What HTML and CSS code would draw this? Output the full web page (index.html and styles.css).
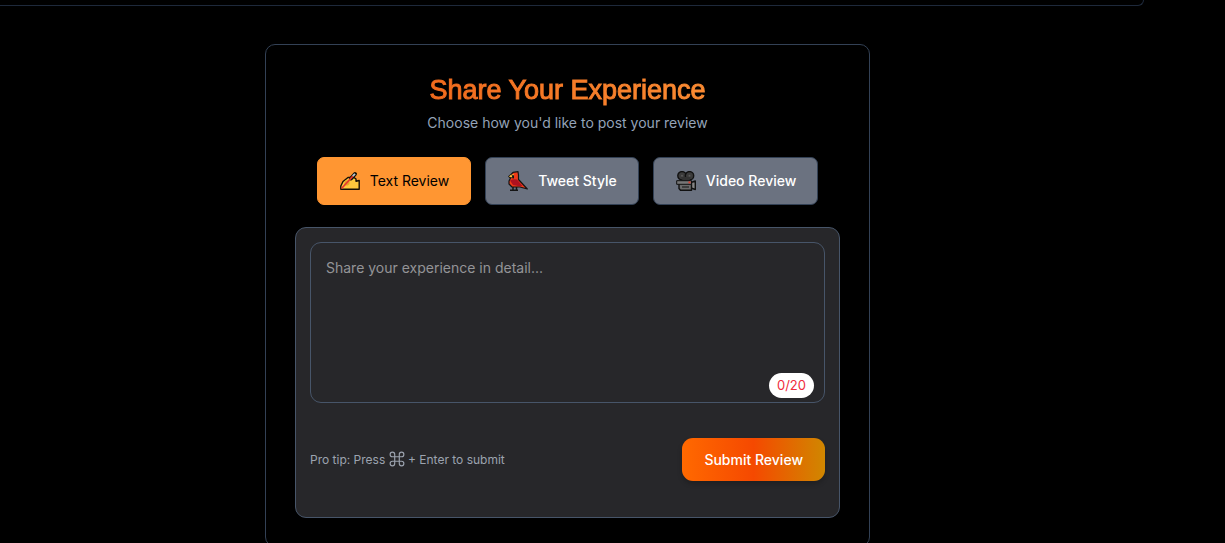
FILE: index.html
```html
<!DOCTYPE html>
<html lang="en">
<head>
<meta charset="utf-8">
<meta name="viewport" content="width=device-width, initial-scale=1">
<title>Share Your Experience</title>
<link rel="stylesheet" href="styles.css">
</head>
<body>
<main class="page">
  <div class="previous-section"></div>
  <section class="review-card">
    <header class="card-header">
      <h1 class="title">Share Your Experience</h1>
      <p class="subtitle">Choose how you'd like to post your review</p>
    </header>
    <div class="tabs">
      <button class="tab tab-active" type="button">
        <svg class="tab-icon" viewBox="0 0 20 20" aria-hidden="true">
          <path d="M.8 18.300V15L3 10.500L8 6.500L14 6.500L16 8V10.300L19.200 9.500V18.300Z" fill="#ffc83d" stroke="#161006" stroke-width="1.400" stroke-linejoin="round"/>
          <path d="M5 9.500H9.500V13L8 14.500H4Z" fill="#e9a329"/>
          <path d="M11 7.500L15 3" stroke="#161006" stroke-width="4" stroke-linecap="round"/>
          <path d="M1.500 17.500L13 5" stroke="#e63a2e" stroke-width="1.800"/>
          <path d="M12.800 5.200L15 2.800" stroke="#bcc8d1" stroke-width="1.800"/>
        </svg>
        <span>Text Review</span>
      </button>
      <button class="tab" type="button">
        <svg class="tab-icon" viewBox="0 0 20 20" aria-hidden="true">
          <path d="M5 16V19M8.500 16V19M2 19.300H10" fill="none" stroke="#151515" stroke-width="1.500"/>
          <path d="M10 .7L5 1.300L3 3.500L.8 5.500L2.500 7L1 10V13L4 16H12L19.300 18L10.500 8.500V4Z" fill="#f03a17" stroke="#151515" stroke-width="1.200" stroke-linejoin="round"/>
          <path d="M2 9.500Q5 7.500 9 8.500L14.500 15L10 15L5 14Z" fill="#ae1220"/>
          <path d="M3.500 3.500L6 4V7.500L3 7Z" fill="#151515"/>
          <path d="M.8 5.500L3.500 3.500L4.300 6.500Z" fill="#ffc83d"/>
          <circle cx="5" cy="3.800" r=".8" fill="#ffc83d"/>
        </svg>
        <span>Tweet Style</span>
      </button>
      <button class="tab" type="button">
        <svg class="tab-icon" viewBox="0 0 20 20" aria-hidden="true">
          <g stroke="#111" stroke-width="1.400" stroke-linejoin="round">
            <path d="M15 11.500L19.300 10V18.500L15 17Z" fill="#858585"/>
            <circle cx="6" cy="4.800" r="4.200" fill="#3b3b3b"/>
            <circle cx="13.500" cy="4.800" r="4.200" fill="#3b3b3b"/>
            <path d="M3 12H15.500V19.300H4.500L3 17.500Z" fill="#6a6a6a"/>
          </g>
          <path d="M5 6H15L13 10H7Z" fill="#333"/>
          <path d="M.7 9.700H15.500V13.300H.7Z" fill="#777" stroke="#111"/>
          <circle cx="6" cy="4.800" r="1" fill="#5a5a5a"/>
          <circle cx="13.500" cy="4.800" r="1" fill="#5a5a5a"/>
          <path d="M6 16H13" stroke="#222" stroke-width="1.200"/>
          <path d="M12.500 10.500H14.500V12.300H12.500Z" fill="#e33b2c"/>
        </svg>
        <span>Video Review</span>
      </button>
    </div>
    <form class="panel">
      <div class="field">
        <textarea class="review-input" aria-label="Your review" placeholder="Share your experience in detail..."></textarea>
        <span class="counter">0/20</span>
      </div>
      <div class="actions">
        <p class="tip">Pro tip: Press <svg class="command" viewBox="0 0 14 14" role="img" aria-label="Command"><path d="M5 5V3A2 2 0 1 0 3 5H11A2 2 0 1 0 9 3V11A2 2 0 1 0 11 9H3A2 2 0 1 0 5 11V5"/></svg> + Enter to submit</p>
        <button class="submit" type="button">Submit Review</button>
      </div>
    </form>
  </section>
</main>
</body>
</html>
```
FILE: styles.css
```css
* {
  box-sizing: border-box;
}

body {
  margin: 0;
  height: 100vh;
  overflow: hidden;
  background: #000;
  color: #fff;
  font-family: Inter, "Liberation Sans", sans-serif;
  font-size: 14px;
  line-height: 20px;
}

h1,
p {
  margin: 0;
}

button,
textarea {
  font: inherit;
}

.page {
  margin-left: -9px;
  padding-right: 81px;
}

.previous-section {
  height: 6px;
  border: solid #1e293b;
  border-width: 0 1px 1px 0;
  border-bottom-right-radius: 6px;
}

.review-card {
  max-width: 605px;
  margin: 38px auto 0;
  padding: 28px 29px;
  border: 1px solid #334155;
  border-radius: 10px;
}

.card-header {
  text-align: center;
}

.title {
  width: fit-content;
  margin: 0 auto;
  font-family: "Liberation Sans", Arial, sans-serif;
  font-size: 27px;
  font-weight: 400;
  line-height: 34px;
  color: transparent;
  background: linear-gradient(90deg, #f26b1d, #fb8b32);
  background-clip: text;
  -webkit-text-stroke: 1px transparent;
}

.subtitle {
  margin-top: 6px;
  color: #94a3b8;
}

.tabs {
  display: flex;
  justify-content: center;
  gap: 14px;
  margin-top: 24px;
}

.tab {
  display: flex;
  align-items: center;
  gap: 10px;
  height: 48px;
  padding: 0 21px 0 22px;
  border: 1px solid #334155;
  border-radius: 7px;
  background: #6b7280;
  color: #fff;
  font-weight: 500;
}

.tab-active {
  border-color: #ff9632;
  background: #ff9632;
  color: #000;
  font-weight: 400;
}

.tab-icon {
  width: 20px;
  height: 20px;
}

.panel {
  margin-top: 22px;
  padding: 14px 14px 36px;
  border: 1px solid #475569;
  border-radius: 11px;
  background: #27272a;
}

.field {
  position: relative;
}

.review-input {
  display: block;
  width: 100%;
  height: 161px;
  padding: 15px;
  border: 1px solid #475569;
  border-radius: 11px;
  background: transparent;
  color: #fff;
  resize: none;
}

.review-input::placeholder {
  color: #949497;
}

.counter {
  position: absolute;
  right: 11px;
  bottom: 5px;
  padding: 3px 8px;
  border-radius: 13px;
  background: #fff;
  color: #ef2b3c;
  font-size: 13px;
  line-height: 19px;
}

.actions {
  display: flex;
  align-items: center;
  justify-content: space-between;
  margin-top: 35px;
}

.tip {
  color: #9ca3af;
  font-size: 12px;
}

.command {
  width: 16px;
  height: 16px;
  vertical-align: -3px;
  fill: none;
  stroke: currentColor;
  stroke-width: 1;
}

.submit {
  height: 43px;
  padding: 0 22px;
  border: 0;
  border-radius: 11px;
  background: linear-gradient(90deg, #ff6900, #f54900 50%, #d08700);
  box-shadow: 0 3px 5px #0003;
  color: #fff;
  font-weight: 500;
}
```
